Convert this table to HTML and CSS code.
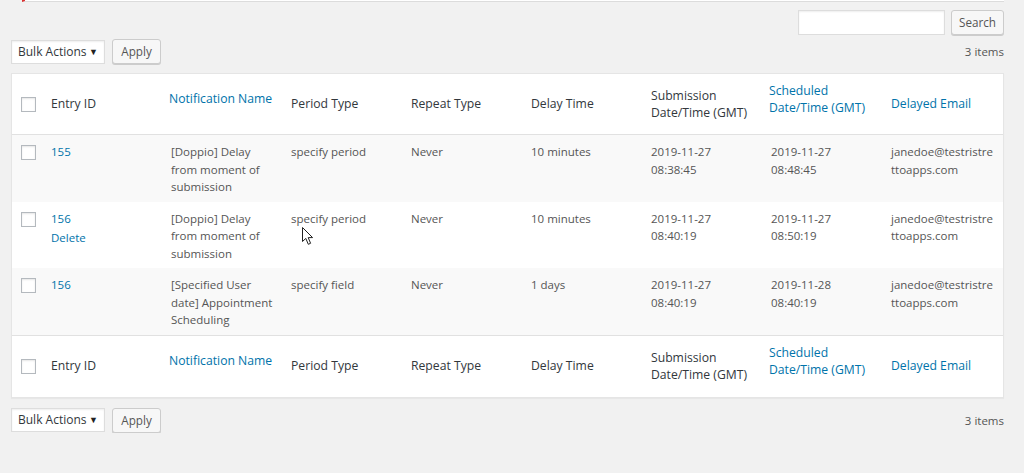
FILE: index.html
```html
<!DOCTYPE html>
<html lang="en">
<head>
<meta charset="utf-8">
<title>Delayed Notifications</title>
<link rel="stylesheet" href="styles.css">
</head>
<body>
<div class="wrap">
  <div class="notice"></div>

  <form class="search-box">
    <input class="search-input" type="search" aria-label="Search">
    <button class="button search-btn" type="button">Search</button>
  </form>

  <div class="tablenav">
    <div class="bulk">
      <div class="select">Bulk Actions <span class="caret">&#9660;</span></div>
      <button class="button apply" type="button">Apply</button>
    </div>
    <div class="count">3 items</div>
  </div>

  <div class="table-wrap">
    <table class="list">
      <colgroup>
        <col class="c-check"><col class="c-id"><col class="c-name"><col class="c-period"><col class="c-repeat"><col class="c-delay"><col class="c-sub"><col class="c-sched"><col>
      </colgroup>
      <thead>
        <tr>
          <th class="check"><span class="cb"></span></th>
          <th>Entry ID</th>
          <th class="sortable up"><a href="#">Notification Name</a></th>
          <th>Period Type</th>
          <th>Repeat Type</th>
          <th>Delay Time</th>
          <th>Submission Date/Time (GMT)</th>
          <th class="sortable up"><a href="#">Scheduled Date/Time (GMT)</a></th>
          <th class="sortable"><a href="#">Delayed Email</a></th>
        </tr>
      </thead>
      <tbody>
        <tr class="alt">
          <td class="check"><span class="cb"></span></td>
          <td><a href="#">155</a></td>
          <td class="shift">[Doppio] Delay from moment of submission</td>
          <td>specify period</td>
          <td>Never</td>
          <td>10 minutes</td>
          <td>2019-11-27 08:38:45</td>
          <td class="shift">2019-11-27 08:48:45</td>
          <td>janedoe@testristre<wbr>ttoapps.com</td>
        </tr>
        <tr>
          <td class="check"><span class="cb"></span></td>
          <td><a href="#">156</a><div class="row-actions"><a href="#">Delete</a></div></td>
          <td class="shift">[Doppio] Delay from moment of submission</td>
          <td>specify period</td>
          <td>Never</td>
          <td>10 minutes</td>
          <td>2019-11-27 08:40:19</td>
          <td class="shift">2019-11-27 08:50:19</td>
          <td>janedoe@testristre<wbr>ttoapps.com</td>
        </tr>
        <tr class="alt">
          <td class="check"><span class="cb"></span></td>
          <td><a href="#">156</a></td>
          <td class="shift">[Specified User date] Appointment Scheduling</td>
          <td>specify field</td>
          <td>Never</td>
          <td>1 days</td>
          <td>2019-11-27 08:40:19</td>
          <td class="shift">2019-11-28 08:40:19</td>
          <td>janedoe@testristre<wbr>ttoapps.com</td>
        </tr>
      </tbody>
      <tfoot>
        <tr>
          <th class="check"><span class="cb"></span></th>
          <th>Entry ID</th>
          <th class="sortable up"><a href="#">Notification Name</a></th>
          <th>Period Type</th>
          <th>Repeat Type</th>
          <th>Delay Time</th>
          <th>Submission Date/Time (GMT)</th>
          <th class="sortable up"><a href="#">Scheduled Date/Time (GMT)</a></th>
          <th class="sortable"><a href="#">Delayed Email</a></th>
        </tr>
      </tfoot>
    </table>
    <svg class="cursor" width="13" height="19" viewBox="0 0 13 19" aria-hidden="true">
      <path d="M0.5 0.5 L0.5 14.5 L3.8 11.4 L6.3 17.3 L8.6 16.3 L6.2 10.6 L10.6 10.6 Z" fill="#fff" stroke="#222" stroke-width="1" stroke-linejoin="round"/>
    </svg>
  </div>

  <div class="tablenav bottom">
    <div class="bulk">
      <div class="select">Bulk Actions <span class="caret">&#9660;</span></div>
      <button class="button apply" type="button">Apply</button>
    </div>
    <div class="count">3 items</div>
  </div>
</div>
</body>
</html>
```

FILE: styles.css
```css
* { box-sizing: border-box; }

html, body {
  margin: 0;
  background: #f1f1f1;
}

body {
  font-family: "Open Sans", "Noto Sans", sans-serif;
  font-size: 11.5px;
  color: #444;
}

a {
  color: #0073aa;
  text-decoration: none;
}

.wrap {
  padding: 0 20px 0 11px;
}

.notice {
  margin-left: 11px;
  height: 2px;
  background: #fff;
  border-left: 3px solid #dc3232;
  border-bottom: 1px solid #dcdcdc;
}

.search-box {
  display: flex;
  justify-content: flex-end;
  gap: 6px;
  margin: 8px 0 0;
  height: 25px;
}

.search-input {
  width: 147px;
  height: 25px;
  margin: 0;
  border: 1px solid #ddd;
  background: #fff;
  box-shadow: inset 0 1px 2px rgba(0, 0, 0, 0.07);
  outline: none;
}

.button {
  height: 25px;
  margin: 0;
  padding: 0 9px;
  border: 1px solid #ccc;
  border-radius: 3px;
  background: #f7f7f7;
  box-shadow: 0 1px 0 #ccc;
  color: #555;
  font-family: inherit;
  font-size: 11.7px;
  line-height: 23px;
}

.search-btn { width: 53px; padding: 0; }

.tablenav {
  display: flex;
  justify-content: space-between;
  align-items: center;
  height: 25px;
  margin: 4px 0 9px;
}

.tablenav.bottom {
  margin: 10px 0 0;
}

.bulk {
  display: flex;
  align-items: center;
  gap: 7px;
}

.select {
  width: 94px;
  height: 24px;
  padding: 0 6px;
  border: 1px solid #ddd;
  background: #fff;
  box-shadow: inset 0 1px 2px rgba(0, 0, 0, 0.07);
  color: #32373c;
  font-size: 12px;
  line-height: 22px;
  display: flex;
  justify-content: space-between;
  align-items: center;
}

.caret {
  font-size: 9px;
  color: #222;
  margin-right: 0;
}

.apply { width: 49px; padding: 0; }

.count {
  color: #555;
}

.table-wrap {
  position: relative;
}

.list {
  width: 100%;
  table-layout: fixed;
  border-collapse: separate;
  border-spacing: 0;
  background: #fff;
  border: 1px solid #e5e5e5;
  box-shadow: 0 1px 1px rgba(0, 0, 0, 0.04);
}

.c-check { width: 30px; }
.c-id { width: 118px; }
.c-name { width: 122px; }
.c-period, .c-repeat, .c-delay { width: 120px; }
.c-sub { width: 118px; }
.c-sched { width: 122px; }

.list th {
  height: 61px;
  padding: 0 9px;
  text-align: left;
  font-weight: normal;
  font-size: 12.2px;
  color: #32373c;
  line-height: 17.5px;
  vertical-align: middle;
}

.list th.sortable { padding-right: 3px; }

.list thead th { border-bottom: 1px solid #e1e1e1; }
.list tfoot th { border-top: 1px solid #e1e1e1; height: 62px; }

.list th.up { padding-bottom: 10px; }

.list td {
  padding: 8px 9px 6px;
  vertical-align: top;
  line-height: 17.5px;
  color: #555;
}

.list td.shift { padding-left: 11px; padding-right: 7px; }

.list tr.alt td { background: #f9f9f9; }

.list .check {
  padding: 0 0 0 9px;
}

.list td.check { padding-top: 10px; }

.cb {
  display: block;
  width: 15px;
  height: 15px;
  border: 1px solid #b4b9be;
  background: #fff;
  box-shadow: inset 0 1px 2px rgba(0, 0, 0, 0.1);
}

.row-actions {
  margin-top: 2px;
}

.cursor {
  position: absolute;
  left: 291px;
  top: 154px;
}
```
